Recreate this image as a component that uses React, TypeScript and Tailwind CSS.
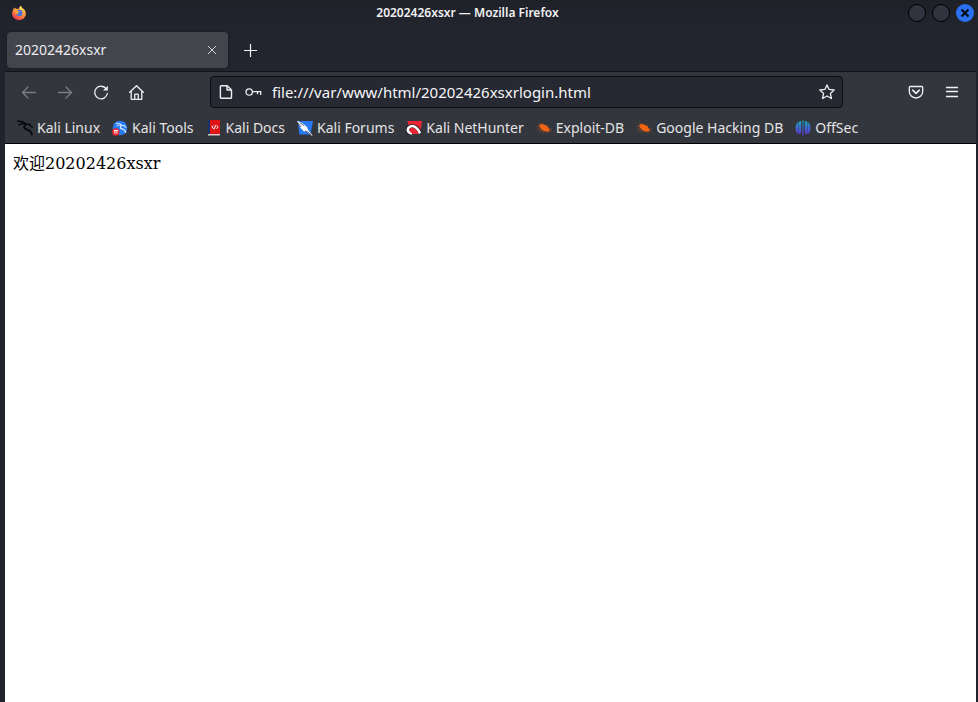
import { useState } from "react";
import type { ReactNode } from "react";

interface Bookmark {
  label: string;
  href: string;
  icon: ReactNode;
}

function FirefoxIcon() {
  return (
    <svg width="16" height="16" viewBox="0 0 16 16" aria-hidden="true">
      <defs>
        <linearGradient id="fx-body" x1="0.8" y1="0" x2="0.3" y2="1">
          <stop offset="0" stopColor="#ffd84a" />
          <stop offset="0.45" stopColor="#ff9a3c" />
          <stop offset="1" stopColor="#f0314f" />
        </linearGradient>
      </defs>
      <path
        d="M9.600.8c1 .7 1.400 1.500 1.500 2.200 1.800.6 3.600 2.500 3.700 5.300.2 3.800-2.800 6.900-6.600 6.900S1.100 12.300 1.100 8.600c0-1.900.6-3.100 1.100-3.900L2.400 3l1.100.9L4 2.500l1.400 1.400c1-.1 2-.1 2.700.2C7.900 2.800 8.600 1.500 9.600.8z"
        fill="url(#fx-body)"
      />
      <circle cx="8.2" cy="8" r="3.2" fill="#4773e0" />
      <path d="M3.800 5.500c1.400-.7 2.500-.3 3.100.5l1.700.3c-.2.900-1.300 1-1.700 1.400-.4.600.1 1.300.9 1.500-1.500.8-3.100-.1-3.300-1.600z" fill="#ffa436" />
      <path d="M9.800 1.200c.9 2.200 3.300 3 3.300 5.800-.5-1-1.200-1.500-1.900-1.700L8.800 4c-.3-1 .2-2.200 1-2.800z" fill="#ffd45c" />
    </svg>
  );
}

/** The dragon shared by the Kali Linux and Kali Tools marks. */
function Dragon({ color }: { color: string }) {
  return (
    <g fill="none" stroke={color} strokeLinecap="round">
      <path d="M.5 1.200C4 .9 7 1.900 9 4" strokeWidth="1.500" />
      <path d="M2 4.800C4.500 3.500 7 3.400 9 4.300" strokeWidth="1.300" />
      <path d="M9 4.200C6.400 5.700 6.600 8.900 9.400 9.400c3.600.7 5 1.800 5.500 5.200" strokeWidth="2" />
      <path d="M9 4.200c2.400-.4 3.800.4 5 2.100l1.400.9M12.800 5.300l.4-1.200" strokeWidth="1.500" />
    </g>
  );
}

function KaliLinuxIcon() {
  return (
    <svg width="16" height="16" viewBox="0 0 16 16" aria-hidden="true">
      <Dragon color="#08090b" />
    </svg>
  );
}

function KaliToolsIcon() {
  return (
    <svg width="16" height="16" viewBox="0 0 16 16" aria-hidden="true">
      <circle cx="8" cy="8" r="7.300" fill="#277bf3" />
      <g transform="translate(3.500 2.500) scale(.68)">
        <Dragon color="#d5e5fd" />
      </g>
      <circle cx="3.800" cy="12" r="3.700" fill="#e9252d" />
      <path d="M1.800 10.500h4M2.900 10.500v3.200M4.900 10.500v3.200" stroke="#fff" strokeWidth="1" fill="none" />
    </svg>
  );
}

function KaliDocsIcon() {
  return (
    <svg width="16" height="16" viewBox="0 0 16 16" aria-hidden="true">
      <path d="M2 0h12v14H2z" fill="#e01414" />
      <path d="M2 0h2v14H2z" fill="#17346e" />
      <path d="M2 14h12v1.500H2z" fill="#d4c6c6" />
      <path d="M7.300 5.500L5.800 7l1.700 1.700 1.300-.9M10.700 5.500L12.200 7l-1.700 1.700M9.900 5L8.200 8.800" stroke="#fff" strokeWidth="1" fill="none" />
    </svg>
  );
}

function KaliForumsIcon() {
  return (
    <svg width="16" height="16" viewBox="0 0 16 16" aria-hidden="true">
      <path d="M1 1h15l-2.400 13.500H2.300z" fill="#2679f0" />
      <path d="M0 .8l5.400 2.300L10 7l1.600 3.800 4 4.400-1 .6-4.600-3.800-3.300-.7L3.300 7.500z" fill="#f8fafc" />
      <path d="M.8 3l3.400 4M2.700 2.400L7 5.600M8 11.200l2.400.5 4 3.400" stroke="#14213a" strokeWidth=".7" fill="none" />
    </svg>
  );
}

function NetHunterIcon() {
  return (
    <svg width="16" height="16" viewBox="0 0 16 16" aria-hidden="true">
      <path d="M1.500 1H16l-1.800 13H4z" fill="#ed2636" />
      <path d="M5 13.500C.2 13 .2 7.600 4.200 6.200c4.300-1.300 7.900 1.700 10.700 7.500" fill="none" stroke="#1b1720" strokeWidth="3.600" />
      <path d="M6 13.500C1 13.300.6 8.300 4 6.600c4.500-2 7.600 1.700 10.200 6.700" fill="none" stroke="#fff" strokeWidth="2.500" />
      <path d="M5 9.600c2.200-1 4.500.6 6 3.400M4.600 11.800l3.500 1.500" fill="none" stroke="#ed2636" strokeWidth="1.300" />
    </svg>
  );
}

function BugIcon() {
  return (
    <svg width="16" height="16" viewBox="0 0 16 16" aria-hidden="true">
      <path d="M5.500 4.500L3.500 3.200M8 4.800L6 3M11.500 7l-.3-2.400M13 9.300l2.800-.5M3.800 7L.6 6M4.500 9l-3.300.3M6.300 10.400l-3.200.9M8.800 11.800l-2.600.6M11.500 12l.4 1M12.800 11l2.400.9" stroke="#a04a20" strokeWidth=".8" />
      <path d="M3.200 4.800c2.700-1 5.600-.4 7.700 1.400 1.600 1 2.500 2.600 2.800 4.600-2 1.400-4.700 1.200-6.600-.2C5.100 9.400 3.300 7.300 3.200 4.800z" fill="#f06414" />
    </svg>
  );
}

function OffSecIcon() {
  return (
    <svg width="16" height="16" viewBox="0 0 16 16" aria-hidden="true">
      <defs>
        <linearGradient id="offsec" x1="0" y1="0" x2="0" y2="1">
          <stop offset="0" stopColor="#13a9b8" />
          <stop offset="0.5" stopColor="#3d68cf" />
          <stop offset="1" stopColor="#6331dd" />
        </linearGradient>
      </defs>
      <path
        d="M3 2.300v11.400C-.2 11.200-.3 4.800 3 2.300zM3.400 2L6.200.7v9.500c0 2-.6 3.400-1.600 4.100l-1.200-.6zM7.400.5h1.200V15.500H7.400zM9.800.7L12.600 2v11.700l-1.200.6c-1-.7-1.600-2.100-1.600-4.100zM13 2.300c3.300 2.500 3.200 8.900 0 11.400z"
        fill="url(#offsec)"
      />
    </svg>
  );
}

const BOOKMARKS: Bookmark[] = [
  { label: "Kali Linux", href: "#kali-linux", icon: <KaliLinuxIcon /> },
  { label: "Kali Tools", href: "#kali-tools", icon: <KaliToolsIcon /> },
  { label: "Kali Docs", href: "#kali-docs", icon: <KaliDocsIcon /> },
  { label: "Kali Forums", href: "#kali-forums", icon: <KaliForumsIcon /> },
  { label: "Kali NetHunter", href: "#kali-nethunter", icon: <NetHunterIcon /> },
  { label: "Exploit-DB", href: "#exploit-db", icon: <BugIcon /> },
  { label: "Google Hacking DB", href: "#ghdb", icon: <BugIcon /> },
  { label: "OffSec", href: "#offsec", icon: <OffSecIcon /> },
];

function WindowBar() {
  return (
    <header className="flex h-[26px] items-center bg-linear-to-b from-[#1f2129] to-[#23252e] pr-1 pl-[11px]">
      <FirefoxIcon />
      <h1 className="flex-1 px-2.5 text-center text-xs font-semibold text-[#f1f1f3]">
        20202426xsxr — Mozilla Firefox
      </h1>
      <div className="flex gap-1.5">
        <button
          type="button"
          aria-label="Minimize"
          className="size-[18px] rounded-full border border-black bg-[#31343f]"
        />
        <button
          type="button"
          aria-label="Maximize"
          className="size-[18px] rounded-full border border-black bg-[#31343f]"
        />
        <button
          type="button"
          aria-label="Close window"
          className="flex size-[18px] items-center justify-center rounded-full bg-[#2a71f4]"
        >
          <svg width="10" height="10" viewBox="0 0 10 10" aria-hidden="true">
            <path d="M1.500 1.500l7 7M8.500 1.500l-7 7" stroke="#080b12" strokeWidth="2.200" />
          </svg>
        </button>
      </div>
    </header>
  );
}

function TabStrip() {
  return (
    <div className="flex h-[45px] items-center pt-1.5 pb-[3px] pl-0.5">
      <div className="flex h-9 w-[221px] items-center rounded bg-[#43454c] pr-1 pl-2 shadow-[0_0_3px_#15171d]">
        <span className="flex-1 truncate text-sm text-[#ececee]">20202426xsxr</span>
        <button type="button" aria-label="Close tab" className="flex size-6 items-center justify-center">
          <svg width="10" height="10" viewBox="0 0 10 10" aria-hidden="true">
            <path d="M1 1l8 8M9 1L1 9" stroke="#d6d6d9" strokeWidth="1" />
          </svg>
        </button>
      </div>
      <button type="button" aria-label="New tab" className="ml-1 flex size-9 items-center justify-center">
        <svg width="13" height="13" viewBox="0 0 13 13" aria-hidden="true">
          <path d="M6.500 0v13M0 6.500h13" stroke="#f3f3f4" strokeWidth="1.200" />
        </svg>
      </button>
    </div>
  );
}

function ToolButton({ label, dim, children }: { label: string; dim?: boolean; children: ReactNode }) {
  return (
    <button
      type="button"
      aria-label={label}
      disabled={dim}
      className={`flex h-8 w-9 items-center justify-center ${dim ? "text-[#7b7d83]" : "text-[#f1f1f2]"}`}
    >
      <svg
        width="16"
        height="16"
        viewBox="0 0 16 16"
        fill="none"
        stroke="currentColor"
        strokeWidth="1.300"
        strokeLinecap="round"
        strokeLinejoin="round"
        aria-hidden="true"
      >
        {children}
      </svg>
    </button>
  );
}

function NavBar() {
  const [url, setUrl] = useState("file:///var/www/html/20202426xsxrlogin.html");

  return (
    <div className="flex h-10 items-center px-1.5">
      <ToolButton label="Back" dim>
        <path d="M14.500 8.500H1.500M7 3L1.500 8.500 7 14" />
      </ToolButton>
      <ToolButton label="Forward" dim>
        <path d="M1.500 8.500h13M9 3l5.500 5.500L9 14" />
      </ToolButton>
      <ToolButton label="Reload">
        <path d="M13.300 5A6.300 6.300 0 1 0 14.300 9.500" />
        <path d="M14.800 1.800v4.800H10z" fill="currentColor" stroke="none" />
      </ToolButton>
      <ToolButton label="Home">
        <path d="M.7 8.300L7.500 1.700l6.800 6.600M2.200 7.500v7.200c0 .5.300.8.800.8h9c.5 0 .8-.3.800-.8V7.500" />
        <path d="M5.700 15.500v-4.600c0-.5.300-.8.800-.8h2c.5 0 .8.300.8.800v4.600" />
      </ToolButton>

      <div className="mx-[55px] flex h-8 flex-1 items-center rounded border border-[#0d0e12] bg-[#262832] px-[7px] text-[#ededf0]">
        <svg width="16" height="16" viewBox="0 0 16 16" fill="none" stroke="currentColor" strokeWidth="1.400" strokeLinejoin="round" aria-hidden="true">
          <path d="M3.200 1.700h6l4.300 4.300v7.500c0 .5-.3.800-.8.800H3.200c-.5 0-.8-.3-.8-.8v-11c0-.5.300-.8.800-.8z" />
          <path d="M9 1.700v4.300h4.500" />
        </svg>
        <svg width="18" height="16" viewBox="0 0 18 16" fill="none" stroke="currentColor" strokeWidth="1.300" className="ml-2.5" aria-hidden="true">
          <circle cx="5.200" cy="8" r="3.200" />
          <path d="M8.400 7.700h9M13.500 7.700v2.600M16.700 7.700v3.300" />
        </svg>
        <input
          type="text"
          aria-label="Address"
          spellCheck={false}
          value={url}
          onChange={(e) => setUrl(e.target.value)}
          className="ml-2.5 min-w-0 flex-1 bg-transparent text-[15px] leading-5 text-[#f6f6f7] outline-none"
        />
        <button type="button" aria-label="Bookmark this page" className="flex size-4 items-center justify-center">
          <svg width="16" height="16" viewBox="0 0 16 16" fill="none" stroke="currentColor" strokeWidth="1.300" strokeLinejoin="round" aria-hidden="true">
            <path d="M8 .9l2.100 4.500 5.100.6-3.800 3.400 1 5.100L8 12l-4.400 2.500 1-5.100L.8 6l5.100-.6z" />
          </svg>
        </button>
      </div>

      <ToolButton label="Save to Pocket">
        <path d="M2.300 2.500h11.400c.6 0 1 .4 1 1v3.800a6.700 6.700 0 0 1-13.400 0V3.500c0-.6.400-1 1-1z" />
        <path d="M4.700 6.200L8 9.300l3.300-3.100" strokeWidth="1.600" />
      </ToolButton>
      <ToolButton label="Menu">
        <path d="M2.500 3.500h11M2.500 7.500h11M2.500 12.500h11" />
      </ToolButton>
    </div>
  );
}

function BookmarksBar() {
  return (
    <nav aria-label="Bookmarks" className="flex h-[31px] items-center gap-3 overflow-hidden px-3">
      {BOOKMARKS.map((b) => (
        <a
          key={b.label}
          href={b.href}
          className="flex shrink-0 items-center gap-1 text-sm whitespace-nowrap text-[#e4e4e6]"
        >
          {b.icon}
          {b.label}
        </a>
      ))}
    </nav>
  );
}

export default function App() {
  return (
    <div className="flex min-h-screen flex-col bg-[#23252e] font-['Noto_Sans',sans-serif]">
      <WindowBar />
      <div className="flex flex-1 flex-col border-r-2 border-l-[5px] border-[#20222c]">
        <TabStrip />
        <div className="border-t border-b border-t-[#111319] border-b-black bg-[#34363d]">
          <NavBar />
          <BookmarksBar />
        </div>
        <main className="flex-1 bg-white p-2 font-['DejaVu_Serif','Noto_Sans_CJK_SC',serif] text-base text-black">
          欢迎20202426xsxr
        </main>
      </div>
    </div>
  );
}
